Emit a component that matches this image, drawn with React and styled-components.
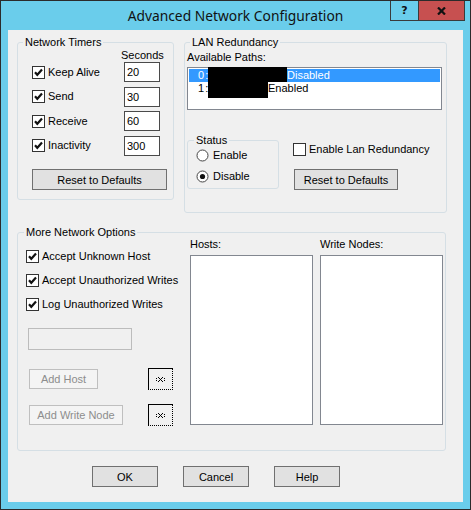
import React from "react";
import styled, { createGlobalStyle } from "styled-components";

const GlobalStyle = createGlobalStyle`
  html, body {
    margin: 0;
    padding: 0;
    background: #ffffff;
  }
  body {
    font-family: "Liberation Sans", Arial, sans-serif;
    font-size: 11px;
    color: #000;
  }
  * {
    box-sizing: border-box;
  }
`;

// small drawings

const CheckBox = ({ on }) => (
  <svg width="13" height="13" viewBox="0 0 13 13">
    <rect x="0.5" y="0.5" width="12" height="12" fill="#fff" stroke="#333" />
    {on && (
      <path d="M3 6.2 L5.3 8.8 L10 3.6" fill="none" stroke="#111" strokeWidth="2.2" />
    )}
  </svg>
);

const Radio = ({ on }) => (
  <svg width="13" height="13" viewBox="0 0 13 13">
    <circle cx="6.5" cy="6.5" r="5.5" fill="#fff" stroke="#444" />
    {on && <circle cx="6.5" cy="6.5" r="2.6" fill="#111" />}
  </svg>
);

const RemoveGlyph = () => (
  <svg width="9" height="7" viewBox="0 0 9 7">
    <rect x="0" y="2" width="1" height="1" fill="#000" />
    <rect x="0" y="4" width="1" height="1" fill="#000" />
    <rect x="8" y="2" width="1" height="1" fill="#000" />
    <rect x="8" y="4" width="1" height="1" fill="#000" />
    <rect x="2" y="1" width="1" height="1" fill="#000" />
    <rect x="6" y="1" width="1" height="1" fill="#000" />
    <rect x="3" y="2" width="1" height="1" fill="#000" />
    <rect x="5" y="2" width="1" height="1" fill="#000" />
    <rect x="4" y="3" width="1" height="1" fill="#000" />
    <rect x="3" y="4" width="1" height="1" fill="#000" />
    <rect x="5" y="4" width="1" height="1" fill="#000" />
    <rect x="2" y="5" width="1" height="1" fill="#000" />
    <rect x="6" y="5" width="1" height="1" fill="#000" />
  </svg>
);

const CloseGlyph = () => (
  <svg width="9" height="8" viewBox="0 0 9 8">
    <path d="M1 0.5 L8 7.5 M8 0.5 L1 7.5" stroke="#111" strokeWidth="2.2" />
  </svg>
);

class App extends React.Component {
  render() {
    return (
      <>
        <GlobalStyle />
        <Window>
          <TitleBar>
            <Title>Advanced Network Configuration</Title>
            <TitleButtons>
              <HelpButton>?</HelpButton>
              <CloseButton>
                <CloseGlyph />
              </CloseButton>
            </TitleButtons>
          </TitleBar>

          <Client>
            <TopRow>
              <Group $w={157} $h={165}>
                <Caption $offset={5}>Network Timers</Caption>
                <TimersBody>
                  <SecondsLabel>Seconds</SecondsLabel>
                  <TimerRows>
                    {[
                      ["Keep Alive", "20"],
                      ["Send", "30"],
                      ["Receive", "60"],
                      ["Inactivity", "300"],
                    ].map(([name, value]) => (
                      <TimerRow key={name}>
                        <CheckLabel>
                          <CheckBox on />
                          {name}
                        </CheckLabel>
                        <NumberField readOnly value={value} />
                      </TimerRow>
                    ))}
                  </TimerRows>
                  <Button $w={135} $top={13.5}>
                    Reset to Defaults
                  </Button>
                </TimersBody>
              </Group>

              <Group $w={263} $h={178}>
                <Caption $offset={5}>LAN Redundancy</Caption>
                <LanBody>
                  <FieldLabel>Available Paths:</FieldLabel>
                  <PathList>
                    <PathRow $selected>
                      <Lead>0 :</Lead>
                      <Redact $w={79} $h={15} $top={-2} />
                      Disabled
                    </PathRow>
                    <PathRow>
                      <Lead>1 :</Lead>
                      <Redact $w={60} $h={16} $top={0} />
                      Enabled
                    </PathRow>
                  </PathList>
                  <StatusRow>
                    <Group $w={92} $h={56}>
                      <Caption $offset={6}>Status</Caption>
                      <StatusBody>
                        <CheckLabel $gap={4}>
                          <Radio />
                          Enable
                        </CheckLabel>
                        <CheckLabel $gap={4}>
                          <Radio on />
                          Disable
                        </CheckLabel>
                      </StatusBody>
                    </Group>
                    <LanActions>
                      <CheckLabel>
                        <CheckBox />
                        Enable Lan Redundancy
                      </CheckLabel>
                      <Button $w={104} $top={13.5} $left={1}>
                        Reset to Defaults
                      </Button>
                    </LanActions>
                  </StatusRow>
                </LanBody>
              </Group>
            </TopRow>

            <Group $w={429} $h={226} $top={12}>
              <Caption $offset={6}>More Network Options</Caption>
              <OptionsBody>
                <OptionsLeft>
                  <OptionChecks>
                    <CheckLabel>
                      <CheckBox on />
                      Accept Unknown Host
                    </CheckLabel>
                    <CheckLabel>
                      <CheckBox on />
                      Accept Unauthorized Writes
                    </CheckLabel>
                    <CheckLabel>
                      <CheckBox on />
                      Log Unauthorized Writes
                    </CheckLabel>
                  </OptionChecks>
                  <NameField disabled />
                  <AddRow $top={18}>
                    <Button disabled $w={69} $h={20}>
                      Add Host
                    </Button>
                    <RemoveButton>
                      <RemoveGlyph />
                    </RemoveButton>
                  </AddRow>
                  <AddRow $top={14}>
                    <Button disabled $w={94} $h={20}>
                      Add Write Node
                    </Button>
                    <RemoveButton>
                      <RemoveGlyph />
                    </RemoveButton>
                  </AddRow>
                </OptionsLeft>
                <ListColumn>
                  <FieldLabel>Hosts:</FieldLabel>
                  <NodeList />
                </ListColumn>
                <ListColumn>
                  <FieldLabel>Write Nodes:</FieldLabel>
                  <NodeList />
                </ListColumn>
              </OptionsBody>
            </Group>

            <DialogButtons>
              <Button $w={66}>OK</Button>
              <Button $w={66}>Cancel</Button>
              <Button $w={66}>Help</Button>
            </DialogButtons>
          </Client>
        </Window>
      </>
    );
  }
}

export default App;

// window frame

const Window = styled.div`
  width: 471px;
  height: 510px;
  border: 1px solid #2b2b2b;
  background: #6acdeb;
  display: flex;
  flex-direction: column;
`;

const TitleBar = styled.div`
  height: 29px;
  flex-shrink: 0;
  display: grid;
  grid-template-columns: 1fr auto 1fr;
  align-items: start;
`;

const Title = styled.div`
  grid-column: 2;
  line-height: 30px;
  font-family: "Noto Sans", "Open Sans", sans-serif;
  font-size: 13.8px;
  color: #111;
  white-space: nowrap;
`;

const TitleButtons = styled.div`
  grid-column: 3;
  justify-self: end;
  display: flex;
  padding-right: 5px;
`;

const HelpButton = styled.div`
  width: 29px;
  height: 20px;
  border: 1px solid #3a3a3a;
  border-top: none;
  display: flex;
  align-items: center;
  justify-content: center;
  font-family: "DejaVu Sans", sans-serif;
  font-weight: bold;
  font-size: 11px;
  color: #111;
`;

const CloseButton = styled.div`
  width: 47px;
  height: 20px;
  margin-left: -1px;
  border: 1px solid #3a3a3a;
  border-top: none;
  background: #c75050;
  display: flex;
  align-items: center;
  justify-content: center;
`;

const Client = styled.div`
  flex: 1;
  margin: 0 7px 7px 7px;
  background: #f0f0f0;
  padding: 5px 0 0 9px;
  display: flex;
  flex-direction: column;
`;

const TopRow = styled.div`
  display: flex;
  align-items: flex-start;
  gap: 10px;
`;

// group boxes

const Group = styled.fieldset`
  margin: ${(p) => p.$top || 0}px 0 0 0;
  padding: 0;
  min-width: 0;
  width: ${(p) => p.$w}px;
  height: ${(p) => p.$h}px;
  border: 1px solid #d5dfe5;
  border-radius: 3px;
  flex-shrink: 0;
`;

const Caption = styled.legend`
  padding: 0 2px;
  margin-left: ${(p) => p.$offset}px;
  line-height: 14px;
  font-size: 11px;
`;

const CheckLabel = styled.label`
  display: inline-flex;
  align-items: center;
  gap: ${(p) => p.$gap || 3}px;
  height: 13px;
  line-height: 13px;
  white-space: nowrap;
`;

const FieldLabel = styled.div`
  line-height: 13px;
`;

const Button = styled.button`
  width: ${(p) => p.$w}px;
  height: ${(p) => p.$h || 21}px;
  margin: ${(p) => p.$top || 0}px 0 0 ${(p) => p.$left || 0}px;
  padding: 0;
  font: inherit;
  color: #000;
  background: #e1e1e1;
  border: 1px solid #707070;
  border-radius: 0;
  flex-shrink: 0;
  &:disabled {
    background: #f4f4f4;
    border-color: #bfbfbf;
    color: #8d8d8d;
  }
`;

// network timers

const TimersBody = styled.div`
  display: flex;
  flex-direction: column;
  padding-left: 14px;
`;

const SecondsLabel = styled.div`
  line-height: 13px;
  padding-left: 89px;
`;

const TimerRows = styled.div`
  display: flex;
  flex-direction: column;
  gap: 4.5px;
`;

const TimerRow = styled.div`
  display: grid;
  grid-template-columns: 92px 36px;
  align-items: center;
  height: 20px;
`;

const NumberField = styled.input`
  width: 36px;
  height: 20px;
  margin: 0;
  padding: 0 0 0 2px;
  font: inherit;
  color: #000;
  background: #fff;
  border: 1px solid #4a4a4a;
  outline: none;
`;

// lan redundancy

const LanBody = styled.div`
  display: flex;
  flex-direction: column;
  padding: 2px 0 0 2px;
`;

const PathList = styled.div`
  width: 255px;
  height: 43px;
  margin-top: 3px;
  padding: 1px;
  background: #fff;
  border: 1px solid #828790;
`;

const PathRow = styled.div`
  display: flex;
  height: 13px;
  line-height: 13px;
  padding-left: 9px;
  white-space: pre;
  background: ${(p) => (p.$selected ? "#3399ff" : "transparent")};
  color: ${(p) => (p.$selected ? "#fff" : "#000")};
`;

const Lead = styled.span`
  width: 10px;
  flex-shrink: 0;
  word-spacing: -2px;
`;

const Redact = styled.span`
  display: block;
  flex-shrink: 0;
  align-self: flex-start;
  width: ${(p) => p.$w}px;
  height: ${(p) => p.$h}px;
  margin-top: ${(p) => p.$top}px;
  background: #000;
`;

const StatusRow = styled.div`
  display: flex;
  gap: 14px;
  margin-top: 23px;
`;

const StatusBody = styled.div`
  display: flex;
  flex-direction: column;
  gap: 8px;
  padding: 2px 0 0 8px;
`;

const LanActions = styled.div`
  display: flex;
  flex-direction: column;
  align-items: flex-start;
  padding-top: 9.5px;
`;

// more network options

const OptionsBody = styled.div`
  display: flex;
  padding-left: 8px;
  gap: 7px;
`;

const OptionsLeft = styled.div`
  width: 157px;
  display: flex;
  flex-direction: column;
  align-items: flex-start;
  padding-top: 11px;
`;

const OptionChecks = styled.div`
  display: flex;
  flex-direction: column;
  gap: 11px;
`;

const NameField = styled.input`
  width: 104px;
  height: 22px;
  margin: 17px 0 0 2px;
  padding: 0;
  background: #f0f0f0;
  border: 1px solid #bcbcbc;
  outline: none;
`;

const AddRow = styled.div`
  display: grid;
  grid-template-columns: 119px 25px;
  align-items: center;
  margin: ${(p) => p.$top}px 0 0 3px;
`;

const RemoveButton = styled.div`
  width: 25px;
  height: 22px;
  border-top: 1px solid #000;
  border-left: 1px solid #000;
  border-right: 1px dotted #000;
  border-bottom: 1px dotted #000;
  display: flex;
  align-items: center;
  justify-content: center;
`;

const ListColumn = styled.div`
  width: 123px;
  display: flex;
  flex-direction: column;
  margin-top: -1px;
  gap: 4px;
`;

const NodeList = styled.div`
  height: 170px;
  background: #fff;
  border: 1px solid #828790;
`;

// dialog buttons

const DialogButtons = styled.div`
  display: flex;
  gap: 25px;
  margin-top: 15px;
  padding-left: 75px;
`;
